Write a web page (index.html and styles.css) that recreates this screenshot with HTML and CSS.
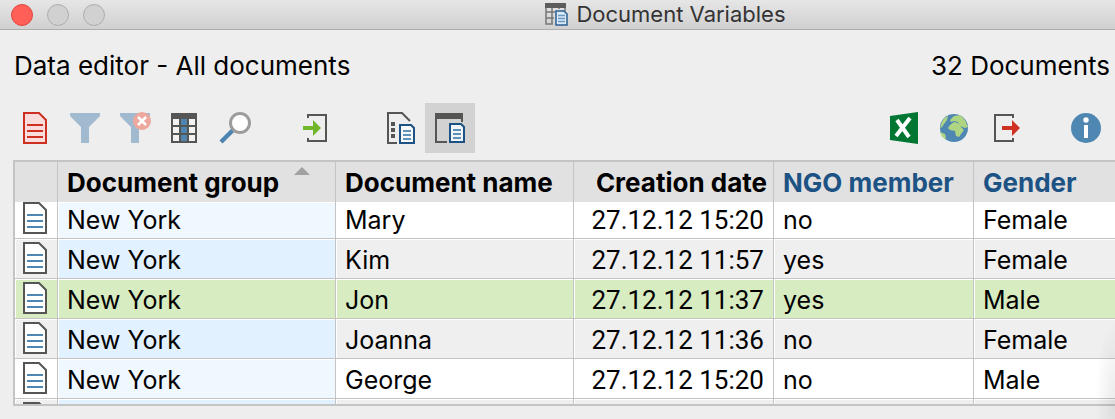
FILE: index.html
```html
<!DOCTYPE html>
<html lang="en">
<head>
<meta charset="utf-8">
<title>Document Variables</title>
<link rel="stylesheet" href="styles.css">
</head>
<body>
<svg class="defs" aria-hidden="true">
  <symbol id="doc" viewBox="0 0 24 32">
    <path d="M1 1H16L23 8V31H1Z" fill="#fff" stroke="#555553" stroke-width="2"/>
    <path d="M4 13H20M4 19H20M4 25H20" stroke="#4f87b3" stroke-width="2"/>
  </symbol>
</svg>
<div class="window">
  <header class="titlebar">
    <div class="lights">
      <button class="light close" aria-label="Close"></button>
      <button class="light" aria-label="Minimize"></button>
      <button class="light" aria-label="Zoom"></button>
    </div>
    <h1 class="title">
      <svg width="24" height="24" viewBox="0 0 24 24" aria-hidden="true">
        <path d="M2 5V22H9M8 5V22M2 10H11M2 16H10M15 5V7M21 5V9" fill="none" stroke="#777" stroke-width="1.5"/>
        <path d="M1 1H22V6H1Z" fill="#5d5b5b"/>
        <path d="M12 9H20L23 12V23H12Z" fill="#dceaf6" stroke="#285f91" stroke-width="1.5"/>
        <path d="M14 13.5H21M14 16.5H21M14 19.5H21" stroke="#6699c4" stroke-width="1.3"/>
      </svg>
      <span>Document Variables</span>
    </h1>
  </header>

  <div class="heading">
    <h2>Data editor - All documents</h2>
    <span>32 Documents</span>
  </div>

  <nav class="toolbar" aria-label="Data editor tools">
    <div class="group">
      <button class="tool" aria-label="Activated documents">
        <svg width="24" height="32" viewBox="0 0 24 32"><path d="M1 1H16L23 8V31H1Z" fill="#fadcdc" stroke="#cb3021" stroke-width="2"/><path d="M4 13H20M4 19H20M4 25H20" stroke="#cb3021" stroke-width="2"/></svg>
      </button>
      <button class="tool" aria-label="Filter">
        <svg width="30" height="30" viewBox="0 0 30 30"><path d="M0 0H30V3L19 14V30H11V14L0 3Z" fill="#a1bad0"/></svg>
      </button>
      <button class="tool" aria-label="Reset filters">
        <svg width="34" height="32" viewBox="0 0 34 32"><path d="M2 1H32V4L21 15V31H13V15L2 4Z" fill="#a1bad0"/><circle cx="24" cy="9" r="9" fill="#eea79c"/><path d="M20 5L28 13M28 5L20 13" stroke="#fff" stroke-width="2.5"/></svg>
      </button>
      <button class="tool" aria-label="Select columns">
        <svg width="28" height="30" viewBox="0 0 28 30"><path d="M0 0H26V30H0Z" fill="#555553"/><path d="M2 6H8V12H2ZM18 6H24V12H18ZM2 14H8V20H2ZM18 14H24V20H18ZM2 22H8V28H2ZM18 22H24V28H18Z" fill="#f4f3f1"/><path d="M10 6H16V12H10ZM10 14H16V20H10ZM10 22H16V28H10Z" fill="#4f86b0"/></svg>
      </button>
      <button class="tool" aria-label="Search">
        <svg width="32" height="32" viewBox="0 0 32 32"><path d="M2 30L14 18" stroke="#4d84b1" stroke-width="4.5"/><circle cx="21" cy="11" r="9.5" fill="#fff" stroke="#9c9c9c" stroke-width="3"/></svg>
      </button>
    </div>
    <div class="group">
      <button class="tool" aria-label="Import data">
        <svg width="24" height="28" viewBox="0 0 24 28"><path d="M5 4V1H23V27H5V24" fill="none" stroke="#555553" stroke-width="2"/><path d="M0 12H10V6L18 14L10 22V16H0Z" fill="#72b62b"/></svg>
      </button>
    </div>
    <div class="group views">
      <button class="tool" aria-label="List of document variables">
        <svg width="30" height="32" viewBox="-2 0 30 32"><path d="M10 31H1V1H15L23 9" fill="none" stroke="#555553" stroke-width="2"/><path d="M4 10H8V14H4ZM4 16H8V20H4ZM4 22H8V26H4Z" fill="#555553"/><path d="M13 13H24L27 16V31H13Z" fill="#f6f8fa" stroke="#1d5384" stroke-width="2"/><path d="M16 19H24M16 23H24M16 27H24" stroke="#5e91b8" stroke-width="2"/></svg>
      </button>
      <button class="tool selected" aria-label="Data editor" aria-pressed="true">
        <svg width="30" height="30" viewBox="0 0 30 30"><path d="M12 29H1V1M27 5V9" fill="none" stroke="#555553" stroke-width="2"/><path d="M0 0H28V6H0Z" fill="#555553"/><path d="M15 11H26L29 14V29H15Z" fill="#f2f5f8" stroke="#1d5384" stroke-width="2"/><path d="M18 17H26M18 21H26M18 25H26" stroke="#5e91b8" stroke-width="2"/></svg>
      </button>
    </div>
    <div class="group end">
      <button class="tool" aria-label="Open as Excel table">
        <svg width="28" height="32" viewBox="0 0 28 32"><path d="M0 4L28 0V32L0 28Z" fill="#007633"/><path d="M7 8L19 25M20 6L6 24" stroke="#fff" stroke-width="4"/></svg>
      </button>
      <button class="tool" aria-label="Open as web page">
        <svg width="28" height="28" viewBox="0 0 28 28"><circle cx="14" cy="14" r="14" fill="#4f87b3"/><path d="M1 11C2 6 5 3 8 2L7 6L4 10L2 13L0 14ZM0 18L5 20L6 24L5 25C2 23 1 21 0 18ZM10 6L14 2L20 1C24 4 26 7 27 11L28 13L25 14L20 12L18 8L14 7L11 8ZM10 11L14 8L18 9L21 13L24 16L21 20L19 23L16 22L15 17L10 16L8 14Z" fill="#afd583"/></svg>
      </button>
      <button class="tool" aria-label="Export data">
        <svg width="32" height="28" viewBox="-6 0 32 28"><path d="M19 4V1H1V27H19V24" fill="none" stroke="#555553" stroke-width="2"/><path d="M8 12H18V6L26 14L18 22V16H8Z" fill="#cf3223"/></svg>
      </button>
    </div>
    <div class="group help">
      <button class="tool" aria-label="Help">
        <svg width="30" height="30" viewBox="0 0 30 30"><circle cx="15" cy="15" r="15" fill="#4f87b3"/><circle cx="15" cy="7" r="2.7" fill="#fff"/><path d="M13 12H17V25H13Z" fill="#fff"/></svg>
      </button>
    </div>
  </nav>

  <div class="grid">
    <table>
      <colgroup><col class="c-icon"><col class="c-group"><col class="c-name"><col class="c-date"><col class="c-ngo"><col></colgroup>
      <thead>
        <tr><th></th><th>Document group<svg class="arrow" width="16" height="8" viewBox="0 0 16 8"><path d="M0 8L8 0L16 8Z" fill="#a1a1a1"/></svg></th><th>Document name</th><th class="date-head">Creation date</th><th class="var">NGO member</th><th class="var">Gender</th></tr>
      </thead>
      <tbody>
        <tr class="first"><td><svg class="doc"><use href="#doc"/></svg></td><td>New York</td><td>Mary</td><td class="date">27.12.12 15:20</td><td>no</td><td>Female</td></tr>
        <tr class="alt"><td><svg class="doc"><use href="#doc"/></svg></td><td>New York</td><td>Kim</td><td class="date">27.12.12 11:57</td><td>yes</td><td>Female</td></tr>
        <tr class="current"><td><svg class="doc"><use href="#doc"/></svg></td><td>New York</td><td>Jon</td><td class="date">27.12.12 11:37</td><td>yes</td><td>Male</td></tr>
        <tr class="alt"><td><svg class="doc"><use href="#doc"/></svg></td><td>New York</td><td>Joanna</td><td class="date">27.12.12 11:36</td><td>no</td><td>Female</td></tr>
        <tr><td><svg class="doc"><use href="#doc"/></svg></td><td>New York</td><td>George</td><td class="date">27.12.12 15:20</td><td>no</td><td>Male</td></tr>
        <tr class="alt"><td><svg class="doc"><use href="#doc"/></svg></td><td></td><td></td><td></td><td></td><td></td></tr>
      </tbody>
    </table>
  </div>
  <div class="edge-shade"></div>
</div>
</body>
</html>
```
FILE: styles.css
```css
* { box-sizing: border-box; }

body {
  margin: 0;
  background: #eee;
  color: #000;
  font-family: Inter, Roboto, "Liberation Sans", sans-serif;
  font-size: 25px;
  line-height: 32px;
}

button {
  margin: 0;
  padding: 0;
  border: 0;
  background: none;
}

h1, h2 { margin: 0; font-size: inherit; font-weight: 400; }

.defs { position: absolute; width: 0; height: 0; }

.window {
  position: relative;
  display: flex;
  flex-direction: column;
  height: 100vh;
  overflow: hidden;
}

.titlebar {
  display: flex;
  align-items: center;
  flex: none;
  height: 30px;
  padding-left: 11px;
  border-bottom: 1px solid #aeaeae;
  background: linear-gradient(#e6e6e6, #d0d0d0);
}

.lights { display: flex; gap: 14px; }

.light {
  width: 22px;
  height: 22px;
  border: 1px solid #adadad;
  border-radius: 50%;
  background: #d1d1d2;
}

.close { border-color: #e2463f; background: #ff5f57; }

.title {
  display: flex;
  flex: 1;
  justify-content: center;
  align-items: center;
  gap: 8px;
  padding: 0 0 2px 110px;
  color: #333;
  font-size: 22px;
  line-height: 26px;
}

.heading {
  display: flex;
  justify-content: space-between;
  flex: none;
  padding: 20px 5px 0 14px;
  font-size: 26px;
}

.toolbar {
  display: flex;
  flex: none;
  gap: 30px;
  padding: 21px 4px 7px 10px;
}

.group { display: flex; }
.views { margin-left: 5px; }
.end { margin-left: auto; }
.help { margin-left: 2px; }

.tool {
  display: flex;
  align-items: center;
  justify-content: center;
  width: 50px;
  height: 50px;
}

.selected { background: #d2d2d2; }

.grid {
  flex: 1;
  min-height: 0;
  margin: 0 0 13px 13px;
  overflow: hidden;
  border: 2px solid #c4c4c4;
  border-right: 0;
}

table {
  width: 100%;
  table-layout: fixed;
  border-spacing: 0;
}

.c-icon { width: 43px; }
.c-group { width: 278px; }
.c-name { width: 238px; }
.c-date { width: 200px; }
.c-ngo { width: 200px; }

th, td {
  height: 40px;
  padding: 2px 9px 0;
  border-right: 1px solid #c4c4c4;
  text-align: left;
  white-space: nowrap;
}

th:last-child, td:last-child { border-right: 0; }

th {
  position: relative;
  background: #e1e1e1;
  font-size: 26px;
  font-weight: 700;
}

.date-head { padding-right: 6px; text-align: right; }

.var { color: #1d5384; }

.arrow { position: absolute; top: 5px; right: 25px; }

td {
  border-bottom: 1px solid #c4c4c4;
  background: #fff;
  box-shadow: inset 1px 1px #fff;
}

.date {
  font-family: Roboto, Inter, sans-serif;
  font-size: 26px;
  text-align: right;
}

td:first-child { padding: 3px 0 0 8px; vertical-align: top; }
td:nth-child(2) { background: #eff7ff; }

.first td { height: 37px; padding-top: 0; }
.first td:first-child { padding-top: 0; }
.alt td { background: #efefef; }
.alt td:nth-child(2) { background: #e1f1ff; }
.current td, .current td:nth-child(2) { background: #d7ecc0; }

.doc { display: block; width: 24px; height: 32px; }

.edge-shade {
  position: absolute;
  right: 0;
  bottom: 0;
  width: 20px;
  height: 100px;
  background: radial-gradient(ellipse at 100% 80%, rgba(0, 0, 0, 0.08), transparent 70%);
}
```
